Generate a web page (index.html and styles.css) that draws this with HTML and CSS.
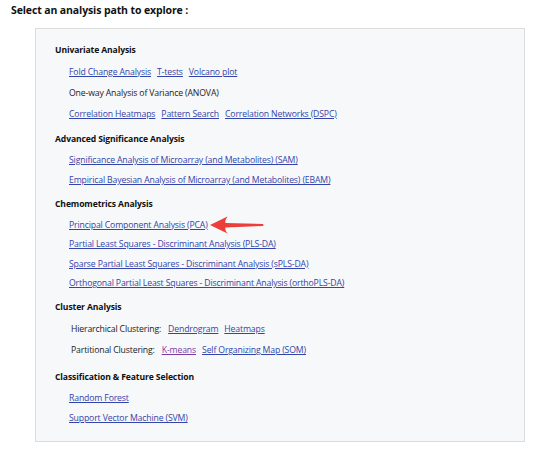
FILE: index.html
```html
<!DOCTYPE html>
<html>
<head>
<meta charset="utf-8">
<link rel="stylesheet" href="styles.css">
</head>
<body>
<h1 class="title">Select an analysis path to explore :</h1>
<div class="panel">
  <section class="group loose">
    <h2 class="heading">Univariate Analysis</h2>
    <div class="row"><a href="#">Fold Change Analysis</a><a href="#">T-tests</a><a href="#">Volcano plot</a></div>
    <div class="row"><span class="plain">One-way Analysis of Variance (ANOVA)</span></div>
    <div class="row"><a href="#">Correlation Heatmaps</a><a href="#">Pattern Search</a><a href="#">Correlation Networks (DSPC)</a></div>
  </section>
  <section class="group">
    <h2 class="heading">Advanced Significance Analysis</h2>
    <div class="row"><a href="#">Significance Analysis of Microarray (and Metabolites) (SAM)</a></div>
    <div class="row"><a href="#">Empirical Bayesian Analysis of Microarray (and Metabolites) (EBAM)</a></div>
  </section>
  <section class="group tight">
    <h2 class="heading">Chemometrics Analysis</h2>
    <div class="row"><a href="#">Principal Component Analysis (PCA)</a><svg class="arrow" width="54" height="18" viewBox="0 0 54 18"><path d="M0 9 L17.5 0.5 Q14.5 5 15.5 7 L53 8 Q54 9 53 10 L15.5 11.5 Q14.5 13.5 17.5 17.5 Z" fill="#ec3f3a"/></svg></div>
    <div class="row"><a href="#">Partial Least Squares - Discriminant Analysis (PLS-DA)</a></div>
    <div class="row"><a href="#">Sparse Partial Least Squares - Discriminant Analysis (sPLS-DA)</a></div>
    <div class="row"><a href="#">Orthogonal Partial Least Squares - Discriminant Analysis (orthoPLS-DA)</a></div>
  </section>
  <section class="group wide">
    <h2 class="heading">Cluster Analysis</h2>
    <div class="row sub"><span class="label">Hierarchical Clustering:</span><a href="#">Dendrogram</a><a href="#">Heatmaps</a></div>
    <div class="row sub"><span class="label">Partitional Clustering:</span><a href="#" class="visited">K-means</a><a href="#">Self Organizing Map (SOM)</a></div>
  </section>
  <section class="group last">
    <h2 class="heading">Classification &amp; Feature Selection</h2>
    <div class="row"><a href="#">Random Forest</a></div>
    <div class="row"><a href="#">Support Vector Machine (SVM)</a></div>
  </section>
</div>
</body>
</html>
```
FILE: styles.css
```css
html, body {
  margin: 0;
  padding: 0;
  background: #ffffff;
}
body {
  font-family: "Open Sans", "Noto Sans", sans-serif;
  color: #222222;
  width: 554px;
}
.title {
  margin: 0;
  padding: 3px 0 0 11px;
  font-size: 10.5px;
  line-height: 15px;
  font-weight: 700;
  color: #111111;
  letter-spacing: -0.12px;
}
.panel {
  margin: 10px 30px 0 35px;
  box-sizing: border-box;
  width: 490px;
  background: #f7f8fa;
  border: 1px solid #dcdcdc;
  padding: 10px 0 13px 19px;
}
.group + .group {
  margin-top: 3px;
}
.group.loose + .group {
  margin-top: 4px;
}
.group.last {
  margin-top: 5px;
}
.heading {
  margin: 0;
  font-size: 8.6px;
  font-weight: 700;
  line-height: 22px;
  color: #111111;
  letter-spacing: -0.12px;
}
.row {
  display: flex;
  align-items: center;
  gap: 6px;
  height: 20px;
  padding-left: 14px;
  font-size: 8.7px;
  letter-spacing: -0.15px;
}
.loose .row {
  height: 21px;
}
.tight .row {
  height: 19.5px;
}
.wide .row {
  height: 21.5px;
}
.row.sub {
  padding-left: 16px;
}
.row a {
  color: #3344aa;
  text-decoration: underline;
}
.row a.visited {
  color: #7a3aa8;
}
.plain, .label {
  color: #222222;
}
.label {
  margin-right: 1px;
}
.arrow {
  margin-left: -4px;
  display: block;
}
```
